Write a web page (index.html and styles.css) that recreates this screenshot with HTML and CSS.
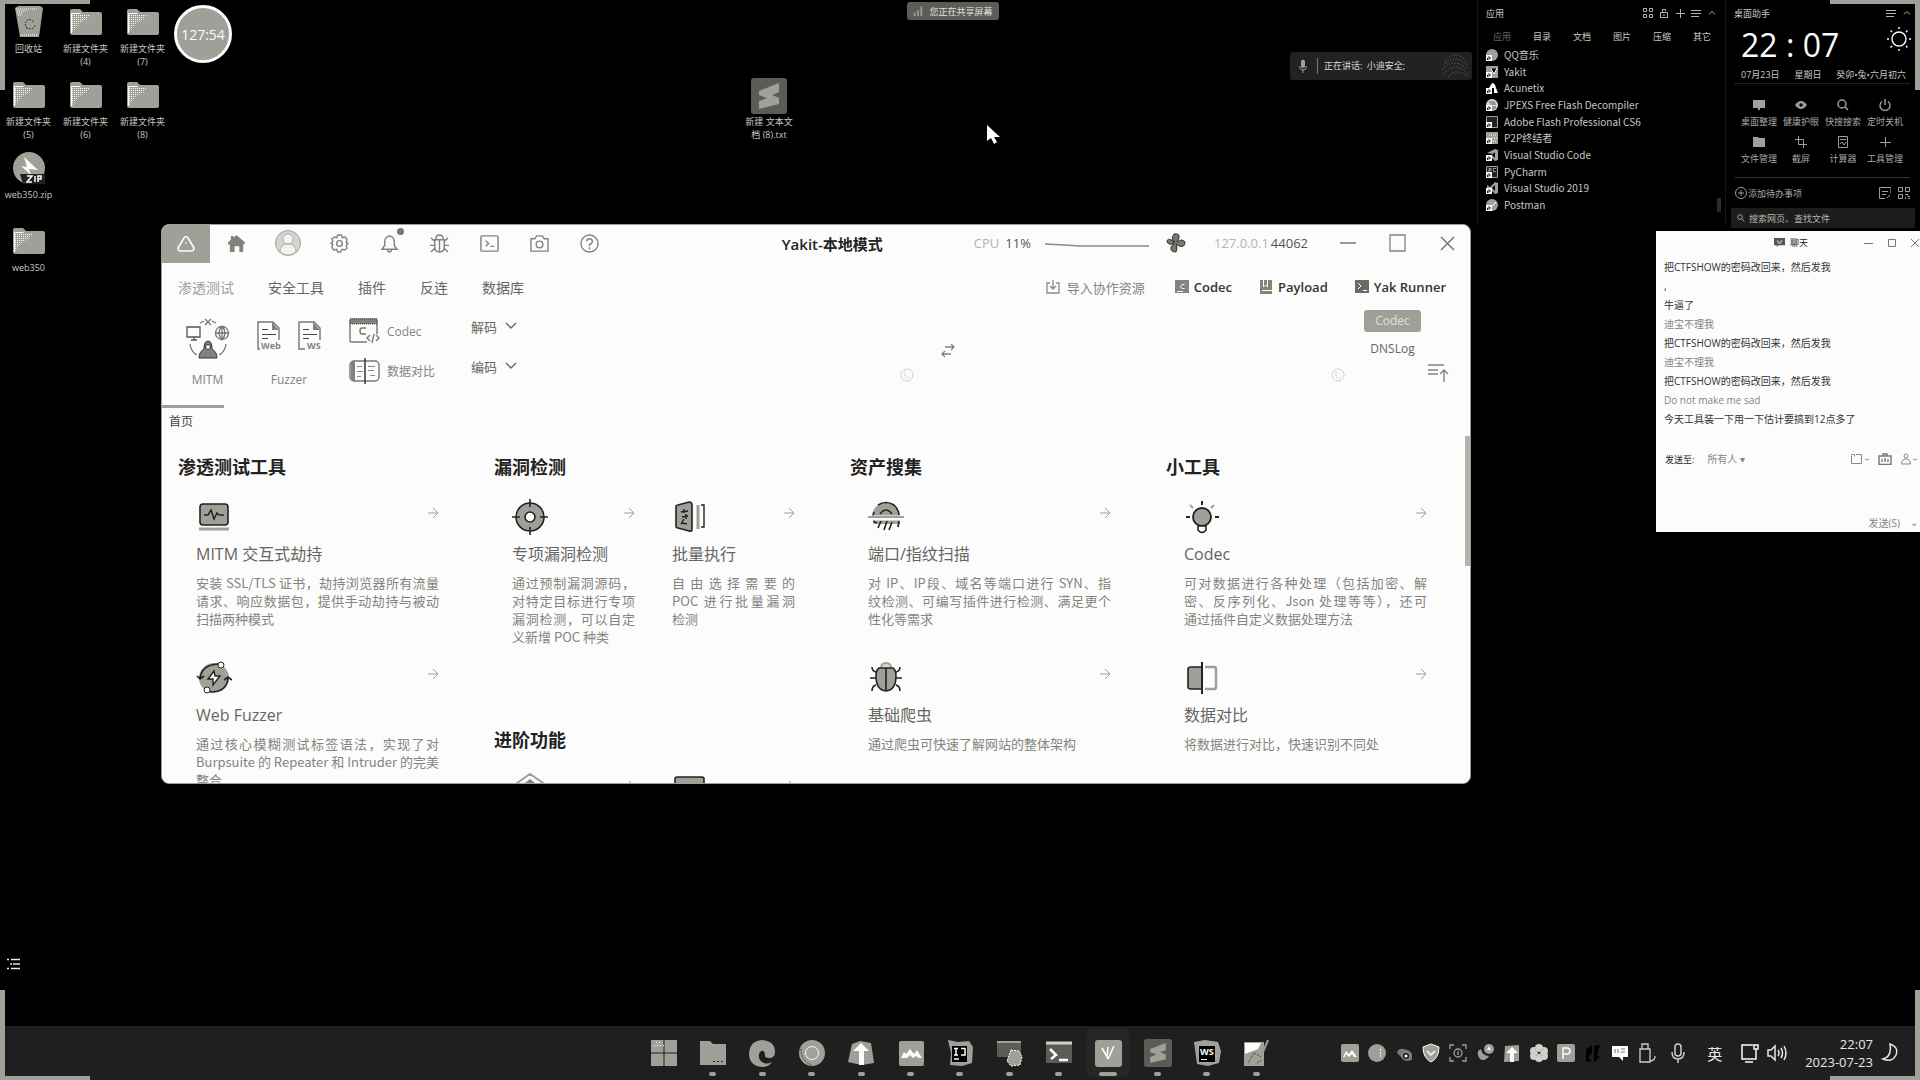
FILE: index.html
```html
<!DOCTYPE html>
<html lang="zh-CN">
<head>
<meta charset="utf-8">
<title>Yakit-本地模式</title>
<link rel="stylesheet" href="styles.css">
</head>
<body>
<svg class="sprite" aria-hidden="true">
  <defs>
    <pattern id="dots" width="2" height="2" patternUnits="userSpaceOnUse"><rect width="1" height="1" fill="#fcfcfc"/></pattern>
  </defs>
  <symbol id="folder" viewBox="0 0 32 26"><path fill="#a0a098" d="M0 2q0-2 2-2h8l3 3h17q2 0 2 2v19q0 2-2 2H2q-2 0-2-2z"/><path fill="url(#dots)" d="M2 5h19l-5 6-7 3-4 6-3 3z"/><path fill="none" stroke="#fcfcfc" d="M1.500 24V4.500h9"/></symbol>
  <symbol id="arrow" viewBox="0 0 12 12"><path fill="none" stroke="#a0a098" d="M1 6h10M6 1l5 5-5 5"/></symbol>
  <symbol id="chev" viewBox="0 0 12 12"><path fill="none" stroke="currentColor" stroke-width="1.400" d="M1 3l5 5 5-5"/></symbol>
  <symbol id="sublime" viewBox="0 0 36 36"><rect width="36" height="36" rx="3" fill="#5c5c57"/><path fill="#a0a098" d="M8 13L28 5v9l-7 3 7 3v6L8 31v-8l8-3-8-3z"/></symbol>
  <symbol id="shortcut" viewBox="0 0 12 12"><rect y="6" width="6" height="6" fill="#fcfcfc"/><path d="M1.500 11V9h2M2.500 7.500L4.500 9l-2 1.500" stroke="#222" fill="none"/></symbol>
  <symbol id="menu" viewBox="0 0 10 10"><path stroke="#b4b4ac" d="M0 2.500h10M0 5.500h10M0 8.500h8"/></symbol>
  <symbol id="up" viewBox="0 0 10 10"><path stroke="#b4b4ac" fill="none" d="M2 6.500l3-3 3 3"/></symbol>
</svg>

<main class="desktop">
  <span class="corner tl"></span><span class="corner tr"></span><span class="corner bl"></span><span class="corner br"></span>

  <section class="files" aria-label="桌面图标">
    <button class="file"><svg viewBox="0 0 32 32"><path fill="#a0a098" d="M2 2l3-2h22l3 2-4 29H7z"/><path fill="none" stroke="#fcfcfc" stroke-dasharray="1 1" d="M3 3h22M4 5h10M4 7h6M5 9h4M7 29h18"/><path fill="none" stroke="#333" stroke-dasharray="2 1" d="M12 17l4-4 5 3M13 22l6 1 4-4M12 18l2 4"/></svg><span>回收站</span></button>
    <button class="file"><svg><use href="#folder"/></svg><span>新建文件夹<br>(4)</span></button>
    <button class="file"><svg><use href="#folder"/></svg><span>新建文件夹<br>(7)</span></button>
    <button class="file"><svg><use href="#folder"/></svg><span>新建文件夹<br>(5)</span></button>
    <button class="file"><svg><use href="#folder"/></svg><span>新建文件夹<br>(6)</span></button>
    <button class="file"><svg><use href="#folder"/></svg><span>新建文件夹<br>(8)</span></button>
    <button class="file newrow"><svg viewBox="0 0 32 32"><circle cx="16" cy="16" r="16" fill="#a0a098"/><path fill="#fcfcfc" d="M11 5l14 13-9-1 2 6L8 14l6 1z"/><path d="M7 22h26v10H10z" fill="#222"/><path d="M14 24h5l-5 6h5M22 24v6M25 30v-6h3v3h-3" stroke="#fcfcfc" stroke-width="1.500" fill="none"/></svg><span>web350.zip</span></button>
    <button class="file newrow"><svg><use href="#folder"/></svg><span>web350</span></button>
  </section>

  <div class="timer">127:54</div>
  <button class="file textfile"><svg><use href="#sublime"/></svg><span>新建 文本文<br>档 (8).txt</span></button>
  <div class="sharing"><svg viewBox="0 0 12 12"><path stroke="#a0a098" stroke-width="2" d="M2 12V8M6 12V5M10 12V1"/></svg>您正在共享屏幕</div>
  <div class="speaking"><svg viewBox="0 0 10 14"><path fill="#a0a098" d="M3 2q2-3 4 0v6q-2 2-4 0z"/><path fill="none" stroke="#a0a098" d="M1.500 7q0 4 3.500 4t3.500-4M5 11v3"/></svg><span class="who">正在讲话:&ensp;小迪安全;</span><svg class="wave" viewBox="0 0 30 26"><path fill="none" stroke="#777770" stroke-dasharray="1 2" d="M5 9q10-14 22 0M3 13q12-14 25 0M2 17q12-14 26 0M4 21q10-14 24 0M8 24q8-10 20 0"/></svg></div>
  <svg class="cursor" viewBox="0 0 14 20"><path fill="#fcfcfc" d="M0 0v16l4-3 3 6 3-2-3-5h6z"/></svg>

  <section class="apps">
    <header><span>应用</span>
      <svg viewBox="0 0 10 10"><path fill="none" stroke="#b4b4ac" d="M.5.5h3v3h-3zM6.500.5h3v3h-3zM.5 6.500h3v3h-3zM6.500 6.500h3v3h-3z"/></svg>
      <svg viewBox="0 0 10 10"><path fill="none" stroke="#b4b4ac" d="M1.500 4.500h7v5h-7zM3.500 4V1.500h3V3M4 7h2"/></svg>
      <svg viewBox="0 0 10 10"><path stroke="#b4b4ac" d="M5.500 1v9M1 5.500h9"/></svg>
      <svg><use href="#menu"/></svg><svg><use href="#up"/></svg>
    </header>
    <nav><button class="dim">应用</button><button>目录</button><button>文档</button><button>图片</button><button>压缩</button><button>其它</button></nav>
    <ul>
      <li><svg viewBox="0 0 12 12"><circle cx="6" cy="6" r="6" fill="#a0a098"/><use href="#shortcut"/></svg>QQ音乐</li>
      <li><svg viewBox="0 0 12 12"><rect width="12" height="12" fill="#a0a098"/><path stroke="#fcfcfc" d="M5 3l3 5 3-6"/><use href="#shortcut"/></svg>Yakit</li>
      <li><svg viewBox="0 0 12 12"><path fill="#fcfcfc" d="M6 1q3 0 4 5l2 5H8V6H3z"/><use href="#shortcut"/></svg>Acunetix</li>
      <li><svg viewBox="0 0 12 12"><circle cx="6" cy="6" r="6" fill="#d8d8d2"/><path stroke="#555" d="M3 3h6M4 5h6M7 7v4M9 7v3"/><use href="#shortcut"/></svg>JPEXS Free Flash Decompiler</li>
      <li><svg viewBox="0 0 12 12"><path fill="#222" stroke="#a0a098" d="M.5.5h11v11H.5z"/><use href="#shortcut"/></svg>Adobe Flash Professional CS6</li>
      <li><svg viewBox="0 0 12 12"><rect width="12" height="12" fill="#a0a098"/><path stroke="#fcfcfc" stroke-dasharray="1 1" d="M3 3h7M6 6h5M7 9h4"/><use href="#shortcut"/></svg>P2P终结者</li>
      <li><svg viewBox="0 0 12 12"><path fill="#a0a098" d="M9 0l3 1v10l-3 1-5-5 3-2v0L1 4zM9 3L6 6l3 3z"/><use href="#shortcut"/></svg>Visual Studio Code</li>
      <li><svg viewBox="0 0 12 12"><path fill="#222" stroke="#a0a098" d="M.5.5h11v11H.5zM3 6V2.500h2v2H3M10 2.500H7.500v3H10"/><use href="#shortcut"/></svg>PyCharm</li>
      <li><svg viewBox="0 0 12 12"><path fill="#a0a098" d="M9 0l3 1v10l-3 1-5-5-3 2V3l3 2zM9 3L6 6l3 3z"/><use href="#shortcut"/></svg>Visual Studio 2019</li>
      <li><svg viewBox="0 0 12 12"><circle cx="6" cy="6" r="6" fill="#a0a098"/><path stroke="#fcfcfc" d="M5 8l5-5"/><use href="#shortcut"/></svg>Postman</li>
    </ul>
    <i class="thumb"></i>
  </section>

  <section class="helper">
    <header><span>桌面助手</span><svg><use href="#menu"/></svg><svg><use href="#up"/></svg></header>
    <div class="clock"><time>22 : 07</time><svg viewBox="0 0 24 24"><g fill="none" stroke="#fcfcfc" stroke-width="1.400"><circle cx="12" cy="12" r="7"/><path d="M12 0v2M12 22v2M0 12h2M22 12h2M3.500 3.500l1.500 1.500M19 19l1.500 1.500M3.500 20.500L5 19M19 5l1.500-1.500"/></g></svg></div>
    <div class="date"><span>07月23日</span><span>星期日</span><span>癸卯•兔•六月初六</span></div>
    <div class="tools">
      <button><svg viewBox="0 0 12 12"><path fill="#a0a098" d="M0 1h12v8H7v2H5V9H0z"/></svg>桌面整理</button>
      <button><svg viewBox="0 0 12 12"><path fill="#a0a098" d="M0 6q6-8 12 0-6 8-12 0z"/><circle cx="6" cy="6" r="1.800"/></svg>健康护眼</button>
      <button><svg viewBox="0 0 12 12"><path fill="none" stroke="#a0a098" stroke-width="1.500" d="M8 8l3 3M9 5a4 4 0 1 1-8 0 4 4 0 0 1 8 0z"/></svg>快搜搜索</button>
      <button><svg viewBox="0 0 12 12"><path fill="none" stroke="#a0a098" stroke-width="1.400" d="M3 2.500a5 5 0 1 0 6 0M6 0v6"/></svg>定时关机</button>
      <button><svg viewBox="0 0 12 12"><path fill="#a0a098" d="M0 1h5l1 1h6v9H0z"/></svg>文件管理</button>
      <button><svg viewBox="0 0 12 12"><path fill="none" stroke="#a0a098" d="M3.500 0v8.500H12M0 3.500h8.500V12"/></svg>截屏</button>
      <button><svg viewBox="0 0 12 12"><path fill="none" stroke="#a0a098" d="M1.500.5h9v11h-9zM3 3.500h6M3 8l2-2 2 3 2-3"/></svg>计算器</button>
      <button><svg viewBox="0 0 12 12"><path stroke="#a0a098" d="M6.500 1v10M1 6.500h11"/></svg>工具管理</button>
    </div>
    <div class="todo"><svg viewBox="0 0 12 12"><circle cx="6" cy="6" r="5.500" fill="none" stroke="#a0a098"/><path stroke="#a0a098" d="M6 3v6M3 6h6"/></svg><span>添加待办事项</span><svg viewBox="0 0 12 12"><path fill="none" stroke="#a0a098" d="M12 7V.5H.5v11H6M3 4.500h6M3 7.500h4M8 11l3-3"/></svg><svg viewBox="0 0 12 12"><path fill="none" stroke="#a0a098" d="M.5.5h4v4h-4zM7.500.5h4v4h-4zM.5 7.500h4v4h-4zM7 7.500h3v2h2M7.500 12v-2M10 11.500h2"/></svg></div>
    <label class="search"><svg viewBox="0 0 12 12"><path fill="none" stroke="#a0a098" stroke-width="1.500" d="M7 7l4 4M8 4.500a3.500 3.500 0 1 1-7 0 3.500 3.500 0 0 1 7 0z"/></svg><input aria-label="搜索" placeholder="搜索网页、查找文件"></label>
  </section>

  <section class="chat">
    <header><svg viewBox="0 0 12 12"><path fill="#555" d="M0 1h12v8H5l-2 2V9H0z"/><path stroke="#fcfcfc" d="M3 4.500h2M7 4.500h2M4 6.500h4"/></svg><span>聊天</span>
      <div class="ctl"><svg viewBox="0 0 10 10"><path stroke="#777" d="M0 5.500h9"/></svg><svg viewBox="0 0 10 10"><path fill="none" stroke="#777" d="M1.500 1.500h7v7h-7z"/></svg><svg viewBox="0 0 10 10"><path stroke="#777" d="M1 1l8 8M9 1L1 9"/></svg></div></header>
    <div class="log">
      <p>把CTFSHOW的密码改回来，然后发我</p><p>,</p><p>牛逼了</p><p class="dim">迪宝不理我</p><p>把CTFSHOW的密码改回来，然后发我</p><p class="dim">迪宝不理我</p><p>把CTFSHOW的密码改回来，然后发我</p><p class="dim">Do not make me sad</p><p>今天工具装一下用一下估计要搞到12点多了</p>
    </div>
    <div class="to"><label for="to">发送至:</label><select id="to"><option>所有人 ▾</option></select>
      <svg viewBox="0 0 20 12"><path fill="none" stroke="#888" d="M1.500 1.500h3v2M6 1.500h5.500v9h-10v-8M15 6l2 1 2-1"/></svg>
      <svg viewBox="0 0 14 12"><path fill="none" stroke="#777" stroke-width="1.400" d="M1 3h12v8.500H1zM5 3V1h4v2M4 9V6M7 9V5M10 9V6"/></svg>
      <svg viewBox="0 0 20 12"><path fill="none" stroke="#888" d="M4 3a2 2 0 1 1 4 0 2 2 0 0 1-4 0zM1.500 11q0-5 4.500-5t4.500 5zM13 6l2 1 2-1"/></svg>
    </div>
    <textarea aria-label="消息"></textarea>
    <footer><button>发送(S)</button><button aria-label="更多">⌄</button></footer>
  </section>

  <section class="yakit">
    <header class="titlebar">
      <button class="logo" aria-label="Yakit"><svg viewBox="0 0 20 20"><path fill="none" stroke="#fcfcfc" stroke-width="1.600" stroke-linejoin="round" d="M8 4q2-3 4 0l6 10q0 3-3 3H5q-3 0-3-3z"/><path stroke="#fcfcfc" d="M10 8v2"/></svg></button>
      <div class="tbicons">
        <button aria-label="首页"><svg viewBox="0 0 20 20"><path fill="#83837c" d="M10 1l9 8-1 2h-1v8h-4v-6H8v6H3v-8H1V9l3-3V2h3v2z"/></svg></button>
        <button aria-label="用户"><svg class="ava" viewBox="0 0 26 26"><circle cx="13" cy="13" r="12.500" fill="#d5d5d0" stroke="#a0a098"/><path fill="#f4f4f2" stroke="#b0b0a8" d="M8 9a5 5 0 1 1 10 0 5 5 0 0 1-10 0zM5 22q0-8 8-8t8 8q-8 6-16 0z"/></svg></button>
        <button aria-label="设置"><svg viewBox="0 0 20 20"><path fill="none" stroke="#83837c" stroke-width="1.500" stroke-linejoin="round" d="M8 1h4l1 3 3-1 2 3-1 3 2 1-2 2 1 3-3 2-2-1-2 3H8l-1-3-3 1-2-3 1-3-2-1 2-2-1-3 3-2 2 1z"/><circle cx="10" cy="10" r="3" fill="none" stroke="#83837c" stroke-width="1.500"/></svg></button>
        <button aria-label="通知" class="bell"><svg viewBox="0 0 20 20"><path fill="none" stroke="#83837c" stroke-width="1.500" d="M2 16h16l-3-4V8q0-5-5-6-5 1-5 6v4zM8 16q0 3 2 3t2-3"/></svg><i></i></button>
        <button aria-label="调试"><svg viewBox="0 0 20 20"><path fill="none" stroke="#83837c" stroke-width="1.500" d="M6 6q0-5 4-5t4 5zM5 6h10v8q0 5-5 5t-5-5zM10 6v13M0 12h5M15 12h5M1 4l4 4M19 4l-4 4M1 19l4-4M19 19l-4-4"/></svg></button>
        <button aria-label="终端"><svg viewBox="0 0 20 20"><path fill="none" stroke="#83837c" stroke-width="1.500" d="M2 2h16q1 0 1 1v14q0 1-1 1H2q-1 0-1-1V3q0-1 1-1zM6 7l3 3-3 3M11 13h4"/></svg></button>
        <button aria-label="截图"><svg viewBox="0 0 20 20"><path fill="none" stroke="#83837c" stroke-width="1.500" d="M1 5h4l2-3h6l2 3h4v13H1z"/><circle cx="10" cy="11" r="3.500" fill="none" stroke="#83837c" stroke-width="1.500"/></svg></button>
        <button aria-label="帮助"><svg viewBox="0 0 20 20"><circle cx="10" cy="10" r="9" fill="none" stroke="#83837c" stroke-width="1.500"/><path fill="none" stroke="#83837c" stroke-width="1.500" d="M7 8q0-3 3-3t3 3q0 2-3 3v2M10 14v2"/></svg></button>
      </div>
      <h1>Yakit-本地模式</h1>
      <div class="cpu"><span class="faint">CPU</span><span>11%</span><svg viewBox="0 0 104 12"><path fill="none" stroke="#8c8c84" stroke-width="1.500" d="M0 7l20 1 14 1h70"/></svg></div>
      <svg class="fan" viewBox="0 0 20 20"><path fill="#777770" stroke="#333" d="M9 9Q4 7 8 1q6-1 5 4l-2 4q5-4 8 0 0 6-6 4l-3-2q2 4 0 8-6 0-5-5l3-4q-5 3-7-1 0-5 6-1z"/></svg>
      <div class="addr"><span class="faint">127.0.0.1</span><span>44062</span></div>
      <div class="winctl">
        <button aria-label="最小化"><svg viewBox="0 0 18 18"><path stroke="#777770" stroke-width="1.500" d="M1 9h16"/></svg></button>
        <button aria-label="最大化"><svg viewBox="0 0 18 18"><path fill="none" stroke="#83837c" stroke-width="1.300" d="M1 1h15v16H1z"/></svg></button>
        <button aria-label="关闭"><svg viewBox="0 0 18 18"><path stroke="#777770" stroke-width="1.500" d="M2 3l13 13M15 3L2 16"/></svg></button>
      </div>
    </header>

    <nav class="menubar">
      <button class="sel">渗透测试</button><button>安全工具</button><button>插件</button><button>反连</button><button>数据库</button>
      <div class="quick">
        <button class="import"><svg viewBox="0 0 14 14"><path fill="none" stroke="#8c8c84" stroke-width="1.300" d="M4 3H1v10h12V3h-3M7 0v8M4 6l3 3 3-3"/></svg>导入协作资源</button>
        <button><svg viewBox="0 0 14 14"><path fill="#83837c" d="M0 0h14v13H0z"/><path fill="none" stroke="#fcfcfc" d="M9.500 4.500H7L5.500 6.500 7 8.500h2.500M2 11.500h6"/></svg>Codec</button>
        <button><svg viewBox="0 0 14 14"><path fill="#83837c" d="M1 0h12v14H1z"/><path fill="none" stroke="#fcfcfc" d="M4.500 0v7l2-2 2 2V0M3 10.500h10"/></svg>Payload</button>
        <button><svg viewBox="0 0 14 14"><path fill="#6b6b65" d="M0 0h14v13H0z"/><path fill="none" stroke="#fcfcfc" d="M3 3l3 3-3 3M8 10.500h4"/></svg>Yak Runner</button>
      </div>
    </nav>

    <div class="ribbon">
      <button class="big"><svg class="mitm" viewBox="0 0 44 42"><g fill="none" stroke="#77776f" stroke-width="1.300"><path stroke="#555" d="M1 9h13v10H1zM5 22h6M8 19v3"/><circle cx="36" cy="15" r="6.500"/><path d="M36 8v14M29 15h14M36 8q-6 7 0 14M36 8q6 7 0 14M4 26q1 8 7 11M40 26q-1 8-7 11M14 5l4-2M30 5l-4-2M19 1l6 6M25 1l-6 6"/></g><path fill="#83837c" stroke="#333" d="M18 31q0-8 4-8t4 8q5 3 5 9H13q0-6 5-9z"/><circle cx="22" cy="29" r="2.500" fill="#eee" stroke="#333"/></svg>MITM</button>
      <button class="big"><span class="pair">
        <svg viewBox="0 0 26 30"><path fill="none" stroke="#77776f" stroke-width="1.400" d="M3 28H1V1h15l6 6v12"/><path fill="#83837c" d="M15 1l7 8h-7z"/><path stroke="#444" d="M5 8.500h6M5 13.500h14M5 17.500h6"/><text x="4" y="28">Web</text></svg>
        <svg viewBox="0 0 26 30"><path fill="none" stroke="#77776f" stroke-width="1.400" d="M7 28H1V1h15l6 6v12"/><path fill="#83837c" d="M15 1l7 8h-7z"/><path stroke="#444" d="M5 8.500h6M5 13.500h14M5 17.500h6"/><text x="9" y="28">WS</text></svg></span>Fuzzer</button>
      <div class="stack">
        <button><svg viewBox="0 0 32 26"><path fill="none" stroke="#77776f" stroke-width="1.400" d="M18 24H2q-1 0-1-2V3q0-2 1-2h25q1 0 1 2v13M17 10h-4q-2 0-2 3t2 3h4M21 17l-3 3 3 3M27 17l3 3-3 3M25 16l-2 9"/><path fill="#83837c" stroke="#444" stroke-dasharray="1 1" d="M1 1h27v5H1z"/></svg>Codec</button>
        <button><svg viewBox="0 0 32 26"><rect x="1" y="3" width="29" height="20" rx="4" fill="none" stroke="#77776f" stroke-width="1.400"/><path fill="#83837c" d="M2 5q0-2 4-2v20q-4 0-4-3z"/><path stroke="#333" stroke-width="1.500" d="M16 0v26"/><path stroke="#888" d="M8 8.500h5M8 13.500h6M8 18.500h4M19 8.500h7M19 12.500h6M21 17.500h5"/></svg>数据对比</button>
      </div>
      <div class="drops"><button>解码 <svg><use href="#chev"/></svg></button><button>编码 <svg><use href="#chev"/></svg></button></div>
      <svg class="spin one" viewBox="0 0 14 14"><circle cx="7" cy="7" r="6" fill="none" stroke="#b8b8b0" stroke-dasharray="2 1"/><path d="M5 3v6q3 2 5 0" fill="none" stroke="#b8b8b0" stroke-dasharray="1 1"/></svg>
      <svg class="swap" viewBox="0 0 14 14"><path fill="none" stroke="#83837c" stroke-width="1.300" d="M4 3h9M10 0l3 3-3 3M10 10H1M4 7l-3 3 3 3"/></svg>
      <svg class="spin two" viewBox="0 0 14 14"><circle cx="7" cy="7" r="6" fill="none" stroke="#b8b8b0" stroke-dasharray="2 1"/><path d="M5 3v6q3 2 5 0" fill="none" stroke="#b8b8b0" stroke-dasharray="1 1"/></svg>
      <div class="modes"><button class="on">Codec</button><button>DNSLog</button></div>
      <button class="fold" aria-label="收起"><svg viewBox="0 0 22 20"><path fill="none" stroke="#83837c" stroke-width="1.400" d="M0 2h16M0 7h10M0 11h10M16 19V7M12 11l4-4 4 4"/></svg></button>
    </div>

    <div class="tabs"><button>首页</button></div>

    <div class="home">
      <div class="col">
        <section><h2>渗透测试工具</h2>
          <article><svg class="ic" viewBox="0 0 36 36"><rect x="4" y="5" width="28" height="21" rx="3" fill="#a0a098" stroke="#222" stroke-width="1.600"/><path fill="none" stroke="#222" stroke-width="1.500" d="M8 16h4l3-5 3 9 3-6 2 2h5"/><path stroke="#a0a098" stroke-width="3" d="M3 30h30"/></svg><svg class="go"><use href="#arrow"/></svg><h3>MITM 交互式劫持</h3><p>安装 SSL/TLS 证书，劫持浏览器所有流量请求、响应数据包，提供手动劫持与被动扫描两种模式</p></article>
          <article><svg class="ic" viewBox="0 0 36 36"><circle cx="18" cy="18" r="15" fill="#a0a098"/><path fill="none" stroke="#222" stroke-width="1.600" d="M4 19Q5 5 22 4M32 18q-1 14-18 14M1 16l3 3 4-3M28 20l4-3 4 3"/><circle cx="25" cy="5" r="3" fill="#fcfcfc" stroke="#222"/><circle cx="11" cy="30" r="3" fill="#fcfcfc" stroke="#222"/><path fill="#fcfcfc" stroke="#222" stroke-width="1.400" d="M18 11l-6 8h5v6l7-9h-5z"/></svg><svg class="go"><use href="#arrow"/></svg><h3>Web Fuzzer</h3><p><span class="line">通过核心模糊测试标签语法，实现了对</span><span class="line">Burpsuite 的 Repeater 和 Intruder 的完美</span>整合</p></article>
        </section>
      </div>
      <div class="col">
        <section><h2>漏洞检测</h2><div class="two">
          <article><svg class="ic" viewBox="0 0 36 36"><circle cx="18" cy="18" r="14" fill="#a0a098" stroke="#222" stroke-width="1.600"/><circle cx="18" cy="18" r="5" fill="#fcfcfc" stroke="#222" stroke-width="1.600"/><path stroke="#222" stroke-width="1.600" d="M18 0v8M18 28v8M0 18h8M28 18h8"/></svg><svg class="go"><use href="#arrow"/></svg><h3>专项漏洞检测</h3><p>通过预制漏洞源码，对特定目标进行专项漏洞检测，可以自定义新增 POC 种类</p></article>
          <article><svg class="ic" viewBox="0 0 36 36"><path fill="#a0a098" stroke="#222" stroke-width="1.600" d="M4 8q0-2 2-2l11-3q3 0 3 3v24q0 3-3 2L6 29q-2 0-2-2z"/><path fill="none" stroke="#222" stroke-width="1.400" d="M9 13l7-1M10 18l6-1M12 10v4M14 15v5M9 25l3-5M15 25l-5-1"/><path stroke="#a0a098" stroke-width="3" d="M26 6v24"/><path fill="none" stroke="#222" stroke-width="1.400" d="M29 6h3v22h-3"/></svg><svg class="go"><use href="#arrow"/></svg><h3>批量执行</h3><p><span class="line">自由选择需要的</span><span class="line">POC 进行批量漏洞</span>检测</p></article>
        </div></section>
        <section><h2>进阶功能</h2><div class="two">
          <article><svg class="ic" viewBox="0 0 36 36"><path fill="none" stroke="#a0a098" stroke-width="2" d="M5 11L18 2l13 9v14l-13 9-13-9z"/><path fill="#83837c" d="M13 11l5-4 5 4v12H13z"/></svg><svg class="go"><use href="#arrow"/></svg></article>
          <article><svg class="ic" viewBox="0 0 36 36"><rect x="3" y="5" width="29" height="26" rx="2" fill="#a0a098" stroke="#222" stroke-width="1.600"/></svg><svg class="go"><use href="#arrow"/></svg></article>
        </div></section>
      </div>
      <div class="col">
        <section><h2>资产搜集</h2>
          <article><svg class="ic" viewBox="0 0 36 36"><path fill="#a0a098" d="M4 17Q5 5 18 4q13 1 14 13v8H6z"/><path fill="none" stroke="#222" stroke-width="1.600" d="M10 6q8-5 16 0 5 5 5 10M6 13l-1 4M12 15q6-8 12 0M6 21v2l3 1M13 22l-3 7M19 22l-3 9M24 23l-3 8M31 22l-1 6"/><path stroke="#fcfcfc" stroke-width="5" d="M0 19h36"/><path stroke="#a0a098" stroke-width="2" d="M0 18h36"/></svg><svg class="go"><use href="#arrow"/></svg><h3>端口/指纹扫描</h3><p><span class="line">对 IP、IP段、域名等端口进行 SYN、指</span><span class="line">纹检测、可编写插件进行检测、满足更个</span>性化等需求</p></article>
          <article><svg class="ic" viewBox="0 0 36 36"><path fill="#d8d8d2" stroke="#a0a098" stroke-width="2" d="M13 8q0-5 5-5t5 5"/><path fill="#a0a098" stroke="#222" stroke-width="1.600" d="M11 8h14q3 2 3 8 0 14-10 15Q8 30 8 16q0-6 3-8zM18 8v23"/><path fill="none" stroke="#222" stroke-width="1.600" d="M8 12q-4-1-4-5M28 12q4-1 4-5M8 18H2M28 18h6M8 25q-4 1-4 6M28 25q4 1 4 6"/></svg><svg class="go"><use href="#arrow"/></svg><h3>基础爬虫</h3><p>通过爬虫可快速了解网站的整体架构</p></article>
        </section>
      </div>
      <div class="col">
        <section><h2>小工具</h2>
          <article><svg class="ic" viewBox="0 0 36 36"><circle cx="18" cy="18" r="9" fill="#a0a098" stroke="#222" stroke-width="1.800"/><path fill="#fcfcfc" stroke="#222" stroke-width="1.600" d="M14 27h8v4q-4 5-8 0z"/><path stroke="#222" stroke-width="2" d="M18 2v4M2 18h4M31 18h4"/><path stroke="#a0a098" stroke-width="2" d="M6 6l3 3M30 6l-3 3"/></svg><svg class="go"><use href="#arrow"/></svg><h3>Codec</h3><p><span class="line">可对数据进行各种处理（包括加密、解</span><span class="line">密、反序列化、Json 处理等等），还可</span>通过插件自定义数据处理方法</p></article>
          <article><svg class="ic" viewBox="0 0 36 36"><path fill="#a0a098" stroke="#222" stroke-width="1.600" d="M18 7H7Q4 7 4 9v18q0 2 3 2h11z"/><path fill="none" stroke="#a0a098" stroke-width="2.500" d="M21 7h9q2 0 2 2v18q0 2-2 2h-9"/><path stroke="#222" stroke-width="2" d="M18 2v32"/></svg><svg class="go"><use href="#arrow"/></svg><h3>数据对比</h3><p>将数据进行对比，快速识别不同处</p></article>
        </section>
      </div>
      <i class="scroll"></i>
    </div>
  </section>

  <svg class="listicon" viewBox="0 0 13 12"><path stroke="#e8e8e4" stroke-width="1.600" d="M0 1.500h2M4 1.500h9M3 6h2M6 6h7M0 10.500h2M4 10.500h9"/></svg>
</main>

<footer class="taskbar">
  <div class="pinned">
    <button aria-label="开始" class="idle"><svg viewBox="0 0 28 28"><path fill="#a0a098" d="M1 1h12.500v12.500H1zM14.500 1H27v12.500H14.500zM1 14.500h12.500V27H1zM14.500 14.500H27V27H14.500z"/><path stroke="#fcfcfc" stroke-dasharray="1 2" d="M4 6.500h10M6 3.500h6"/></svg></button>
    <button aria-label="文件夹"><svg viewBox="0 0 28 28"><path fill="#a0a098" d="M1 2h10l3 3h13v21H1z"/><path stroke="#222" stroke-dasharray="2 2" d="M14 22.500h10"/></svg></button>
    <button aria-label="Edge"><svg viewBox="0 0 28 28"><path fill="#a0a098" d="M14 1q13 1 13 12 0 6-6 6-5 0-4-4-1-4-4-3-4 3-1 9 5 6 12 2-3 5-10 5Q1 27 1 14 2 2 14 1z"/></svg></button>
    <button aria-label="Chrome"><svg viewBox="0 0 28 28"><circle cx="14" cy="14" r="13" fill="#a0a098"/><path fill="none" stroke="#444" stroke-dasharray="2 1" d="M3 10q0 12 11 16"/><circle cx="14" cy="14" r="6.500" fill="#a0a098" stroke="#fcfcfc"/></svg></button>
    <button aria-label="传输"><svg viewBox="0 0 28 28"><path fill="#a0a098" d="M5 5l8-3 11 2 3 20-12 2-14-3z"/><path fill="#fcfcfc" d="M14 4l8 8h-5v14h-5V12H6z"/></svg></button>
    <button aria-label="会议"><svg viewBox="0 0 28 28"><rect x="2" y="2" width="25" height="25" rx="2" fill="#a0a098"/><path fill="#fcfcfc" d="M4 19l3-6 2 2 4-5 4 5 3-4 5 8h-3l-3-2-3 2-3-3-3 3z"/></svg></button>
    <button aria-label="IDEA"><svg viewBox="0 0 28 28"><path fill="#a0a098" d="M2 1l10 2 11-1 4 6-1 16-10 3-12-1 1-12z"/><path fill="#000" d="M6 7h15v16H6z"/><path fill="none" stroke="#fcfcfc" stroke-width="1.500" d="M8 9.500h4M10 10v6M8 16h4M15 9.500h4v6.500h-4M8 20h5"/></svg></button>
    <button aria-label="工具"><svg viewBox="0 0 28 28"><path fill="#5c5c57" d="M2 2h24v16H2z"/><path stroke="#a0a098" stroke-width="2" d="M2 3h24"/><path fill="#a0a098" stroke="#fcfcfc" stroke-dasharray="2 1" d="M16 11l8 1 3 6-2 8-9 1-4-5z"/></svg></button>
    <button aria-label="终端"><svg viewBox="0 0 28 28"><path fill="#5c5c57" d="M1 5h26v19H1z"/><path stroke="#d0d0ca" stroke-width="3" d="M1 4h26"/><path fill="none" stroke="#fcfcfc" stroke-width="2.500" d="M5 10l6 6-5 4M14 21h9"/></svg></button>
    <button aria-label="Yakit" class="on"><svg viewBox="0 0 28 28"><rect x="1" y="1" width="27" height="27" rx="3" fill="#a0a098"/><path fill="none" stroke="#fcfcfc" stroke-width="1.600" d="M8 9l5 9 1-10M20 7l-6 13"/></svg></button>
    <button aria-label="Sublime Text"><svg viewBox="0 0 36 36"><use href="#sublime"/></svg></button>
    <button aria-label="WebStorm"><svg viewBox="0 0 28 28"><path fill="#a0a098" d="M1 3l11-2 13 2 3 9-2 12-11 3-11-2z"/><path fill="#000" d="M6 7h16v16H6z"/><text x="7" y="16" class="ws">WS</text><path stroke="#fcfcfc" d="M8 20.500h6"/></svg></button>
    <button aria-label="记事本"><svg viewBox="0 0 28 28"><path fill="#a0a098" d="M2 3h20v24H2z"/><path fill="#fcfcfc" d="M3 4h16l-3 6-13 5z"/><path stroke="#a0a098" stroke-width="2" d="M26 1l-5 12"/><path fill="none" stroke="#444" stroke-dasharray="2 1" d="M6 24l6-10 7 4M15 24l5-3"/></svg></button>
  </div>
  <div class="tray">
    <svg viewBox="0 0 20 20"><rect x="1" y="1" width="18" height="18" rx="2" fill="#a0a098"/><path fill="#fcfcfc" d="M3 14l3-6 3 3 3-4 5 7h-3l-2-3-3 3-3-3-1 3z"/></svg>
    <svg viewBox="0 0 20 20"><circle cx="10" cy="10" r="9" fill="#a0a098"/><path stroke="#fcfcfc" stroke-dasharray="2 1" d="M13.500 6v8"/></svg>
    <svg viewBox="0 0 20 20"><path fill="#777770" d="M3 10q1-5 7-4 6 1 8 5v6q-6 2-9-1z"/><circle cx="12" cy="13" r="4" fill="#222" stroke="#a0a098"/><circle cx="12" cy="13" r="1.500" fill="#fcfcfc"/></svg>
    <svg viewBox="0 0 20 20"><path fill="#a0a098" stroke="#fcfcfc" d="M10 1l8 3q0 11-8 15Q2 15 2 4z"/><path fill="none" stroke="#fcfcfc" stroke-width="1.500" d="M6 8l4 4 4-4"/></svg>
    <svg viewBox="0 0 20 20"><path fill="none" stroke="#a0a098" stroke-width="1.300" d="M2 6V2h4M14 2h4v4M18 14v4h-4M6 18H2v-4M6 10a4 4 0 1 1 8 0 4 4 0 0 1-8 0zM10 8v4"/></svg>
    <svg viewBox="0 0 20 20"><circle cx="14" cy="6" r="5" fill="#a0a098"/><path fill="#fcfcfc" d="M14 3l2 4h-4z"/><path fill="#a0a098" d="M3 8l3-2q1 7 8 7-4 6-9 3-3-4-2-8z"/></svg>
    <svg viewBox="0 0 20 20"><path fill="#a0a098" d="M3 3l14-1v16l-15 1z"/><path fill="#fcfcfc" d="M10 4l6 6h-4v9H8v-9H4z"/></svg>
    <svg viewBox="0 0 20 20"><g fill="#d0d0ca"><circle cx="10" cy="5" r="4"/><circle cx="10" cy="15" r="4"/><circle cx="5" cy="8" r="4"/><circle cx="15" cy="8" r="4"/><circle cx="5" cy="13" r="4"/><circle cx="15" cy="13" r="4"/></g><path stroke="#777" stroke-dasharray="1 2" d="M6 6l8 8M14 6l-8 8"/></svg>
    <svg viewBox="0 0 20 20"><rect x="1" y="1" width="18" height="18" rx="2" fill="#a0a098"/><path fill="none" stroke="#fcfcfc" stroke-width="1.500" d="M7 16V5h4q3 0 3 3t-3 3H7"/></svg>
    <svg viewBox="0 0 20 20"><path fill="#000" d="M3 6l6-4v8L5 15l4 3-6 1zM11 3l6-1-3 10 3 2-6 5z"/></svg>
    <svg viewBox="0 0 20 20"><path fill="#fcfcfc" d="M2 3h16v11h-5v4l-4-4H2z"/><path stroke="#777" d="M5 6v4M8 6v4M11 6h4M11 9h4"/></svg>
    <svg viewBox="0 0 20 20"><path fill="none" stroke="#d0d0ca" stroke-width="1.300" d="M5 6V1h6v5M3 6h10v13H3zM13 18q5 0 5-5"/></svg>
    <svg class="mic" viewBox="0 0 20 20"><path fill="none" stroke="#d0d0ca" stroke-width="1.500" d="M7 4q0-3 3-3t3 3v6q0 3-3 3t-3-3zM4 9q0 7 6 7t6-7M10 16v4"/></svg>
    <button class="ime">英</button>
    <svg viewBox="0 0 20 20"><path fill="none" stroke="#fcfcfc" stroke-width="1.500" d="M13 2H2v14h14V9M5 19h8M14 2h4v4h-4zM16 6v3"/></svg>
    <svg viewBox="0 0 20 20"><path fill="none" stroke="#e8e8e4" stroke-width="1.500" d="M1 7h3l4-4v14l-4-4H1zM11 7q2 3 0 6M14 5q3 5 0 10M17 3q4 7 0 14"/></svg>
    <div class="now"><span>22:07</span><span>2023-07-23</span></div>
    <svg viewBox="0 0 20 20"><path fill="none" stroke="#e8e8e4" stroke-width="1.500" d="M10 1q9 3 6 11-4 8-13 4 9-2 7-15z"/></svg>
  </div>
</footer>
</body>
</html>
```
FILE: styles.css
```css
:root {
  --paper: #fcfcfc;
  --grey: #a0a098;
  --ink: #222;
  --mid: #66665f;
  --soft: #84847c;
  --bar: #1f1f1f;
}
* { box-sizing: border-box; }
body {
  margin: 0;
  min-height: 100vh;
  display: flex;
  flex-direction: column;
  background: #000;
  color: var(--ink);
  font-family: "Open Sans", "Noto Sans CJK SC", sans-serif;
  font-size: 13px;
  overflow: hidden;
}
button, select, input, textarea {
  font: inherit;
  color: inherit;
  background: none;
  border: 0;
  padding: 0;
  margin: 0;
  outline: 0;
}
h1, h2, h3, p, ul { margin: 0; padding: 0; }
svg { display: block; flex: none; }
.sprite { position: absolute; width: 0; height: 0; }
.desktop { position: relative; flex: 1; }

/* screen-share frame corners */
.corner { position: fixed; width: 90px; height: 90px; border: 0 solid var(--grey); z-index: 5; pointer-events: none; }
.tl { top: 0; left: 0; border-top-width: 4px; border-left-width: 5px; }
.tr { top: 0; right: 0; border-top-width: 4px; border-right-width: 5px; }
.bl { bottom: 0; left: 0; border-bottom-width: 4px; border-left-width: 5px; }
.br { bottom: 0; right: 0; border-bottom-width: 4px; border-right-width: 5px; }

/* desktop files */
.files { display: grid; grid-template-columns: repeat(3, 57px); grid-auto-rows: 73px; width: 171px; }
.newrow { grid-column: 1; }
.file {
  display: flex;
  flex-direction: column;
  align-items: center;
  padding-top: 6px;
  gap: 4px;
  color: #c8c8c2;
  font-size: 9px;
  line-height: 13px;
  white-space: nowrap;
}
.file svg { width: 32px; height: 32px; }
.textfile { position: absolute; top: 72px; left: 739px; width: 60px; gap: 1px; }
.textfile svg { width: 36px; height: 36px; }
.timer {
  position: absolute; top: 5px; left: 174px; width: 58px; height: 58px;
  border: 3px solid var(--paper); border-radius: 50%;
  background: var(--grey); color: var(--paper);
  display: flex; align-items: center; justify-content: center; font-size: 14px;
}
.sharing {
  position: absolute; top: 2px; left: 907px; width: 92px; height: 18px;
  display: flex; align-items: center; justify-content: center; gap: 6px;
  border-radius: 3px; background: #5c5c57; color: #e0e0da; font-size: 9px; white-space: nowrap;
}
.sharing svg { width: 10px; height: 10px; }
.speaking {
  position: absolute; top: 52px; left: 1290px; width: 182px; height: 28px;
  display: flex; align-items: center; padding: 0 2px 0 8px; gap: 9px;
  border-radius: 3px; background: var(--ink); color: #d8d8d2; font-size: 9px;
}
.speaking > svg:first-child { width: 10px; height: 14px; }
.who { border-left: 1px solid #777770; padding-left: 6px; flex: 1; line-height: 16px; }
.speaking .wave { width: 30px; height: 26px; }
.cursor { position: absolute; left: 987px; top: 125px; width: 14px; height: 20px; z-index: 4; }
.listicon { position: absolute; left: 7px; bottom: 56px; width: 13px; height: 12px; }

/* app launcher */
.apps, .helper { position: absolute; top: 0; color: #c8c8c2; font-size: 9px; }
.apps { right: 194px; width: 249px; height: 224px; border: solid #161616; border-width: 0 1px; }
.apps header, .helper header { display: flex; align-items: center; height: 26px; padding: 0 8px; gap: 6px; }
.apps header span, .helper header span { margin-right: auto; }
.apps header svg, .helper header svg { width: 10px; height: 10px; }
.apps nav { display: grid; grid-template-columns: repeat(6, 40px); height: 21px; padding-left: 4px; }
.apps .dim { color: var(--mid); }
.apps ul {
  list-style: none; height: 166px; padding: 0 8px; line-height: 16px;
  font-family: "Noto Sans CJK SC", sans-serif; font-size: 10px;
  display: flex; flex-direction: column; justify-content: space-between;
}
.apps li { display: flex; align-items: center; gap: 6px; }
.apps li svg { width: 12px; height: 12px; }
.thumb { position: absolute; right: 4px; top: 198px; width: 4px; height: 14px; background: #2c2c2c; }

/* desktop helper */
.helper { right: 0; width: 194px; height: 229px; }
.clock { display: flex; justify-content: space-between; padding: 0 9px 0 15px; height: 40px; color: var(--paper); }
.clock time { font: 32px/38px "Open Sans", sans-serif; }
.clock svg { width: 24px; height: 24px; margin-top: 1px; }
.date { display: flex; justify-content: space-between; margin: 0 10px 0 8px; padding: 0 4px 0 7px; height: 18px; line-height: 17px; border-bottom: 1px solid var(--ink); }
.tools { display: grid; grid-template-columns: repeat(4, 42px); grid-auto-rows: 37px; padding: 15px 0 4px 12px; }
.tools button { display: flex; flex-direction: column; align-items: center; gap: 4px; line-height: 13px; white-space: nowrap; color: #a8a8a0; }
.tools svg { width: 12px; height: 12px; }
.todo { display: flex; align-items: center; margin: 0 10px 0 9px; height: 31px; border-top: 1px solid #333; gap: 7px; color: #a8a8a0; }
.todo span { margin: 0 auto 0 -6px; }
.todo svg { width: 12px; height: 12px; }
.search { display: flex; align-items: center; gap: 4px; height: 20px; margin: 0 5px; padding-left: 6px; background: #1c1c1c; }
.search svg { width: 8px; height: 8px; }
.search input { flex: 1; min-width: 0; }
.search input::placeholder { color: #b4b4ac; opacity: 1; }

/* chat window */
.chat {
  position: absolute; right: 0; top: 231px; width: 264px; height: 301px;
  background: var(--paper); font-size: 10px; display: flex; flex-direction: column; overflow: hidden;
}
.chat header { position: relative; display: flex; align-items: center; height: 23px; padding-left: 118px; gap: 5px; font-size: 9px; }
.chat header svg { width: 11px; height: 11px; }
.chat .ctl { display: flex; gap: 13px; margin-left: auto; }
.chat .ctl svg { width: 10px; height: 10px; }
.log { padding: 4px 8px 0; line-height: 19px; height: 195px; color: #333; }
.log .dim { color: var(--soft); }
.to { display: flex; align-items: center; padding-left: 9px; gap: 5px; height: 20px; font-size: 9px; }
.to select { appearance: none; color: var(--soft); margin: 0 auto 0 8px; font-size: 10px; }
.to svg { height: 12px; width: 20px; }
.chat textarea { flex: 1; min-height: 0; resize: none; }
.chat footer { display: flex; justify-content: flex-end; gap: 10px; height: 20px; padding-right: 2px; color: var(--soft); }

/* Yakit window */
.yakit {
  position: absolute; top: 224px; left: 161px; right: 449px; height: 560px;
  display: flex; flex-direction: column; overflow: hidden;
  background: var(--paper); border: 1px solid var(--grey); border-radius: 8px;
}
.titlebar { display: flex; align-items: center; height: 38px; flex: none; padding: 0 13px 2px 0; }
.logo { align-self: flex-start; width: 48px; height: 38px; background: var(--grey); display: grid; place-items: center; }
.logo svg { width: 20px; height: 20px; }
.tbicons { display: flex; }
.tbicons button { width: 50px; height: 26px; display: grid; place-items: center; position: relative; }
.tbicons svg { width: 19px; height: 19px; }
.tbicons .ava { width: 26px; height: 26px; }
.tbicons button:nth-child(-n+2) { width: 52px; }
.bell i { position: absolute; right: 10px; top: -2px; width: 7px; height: 7px; border-radius: 50%; background: #77776f; }
.titlebar h1 { font-size: 15px; font-weight: 600; margin: 0 91px 0 auto; white-space: nowrap; }
.cpu, .addr { display: flex; align-items: center; gap: 6px; color: #55554f; }
.addr { gap: 2px; }
.faint { color: #b4b4ac; }
.cpu svg { width: 104px; height: 12px; margin-left: 8px; }
.fan { width: 20px; height: 20px; margin: 0 28px 0 17px; }
.winctl { display: flex; gap: 32px; margin-left: 31px; }
.winctl svg { width: 18px; height: 18px; }
.menubar { display: flex; align-items: center; flex: none; height: 48px; padding: 0 24px 0 16px; gap: 34px; font-size: 14px; color: var(--mid); }
.menubar .sel { color: #a0a098; }
.quick { display: flex; gap: 27px; margin-left: auto; font-size: 13px; font-weight: 600; color: #333; }
.quick button { display: flex; align-items: center; gap: 5px; }
.quick svg { width: 14px; height: 14px; }
.quick .import { font-weight: 400; color: var(--soft); gap: 7px; margin-right: 3px; }

.ribbon { position: relative; display: flex; flex: none; height: 94px; padding: 5px 20px 0 16px; color: var(--soft); }
.big { display: flex; flex-direction: column; align-items: center; justify-content: space-between; width: 59px; height: 74px; font-size: 12px; line-height: 20px; }
.big + .big { width: 66px; margin-left: 19px; }
.mitm { width: 44px; height: 42px; margin-top: 2px; }
.pair { display: flex; gap: 15px; padding: 5px 0 0 3px; }
.pair svg { width: 26px; height: 30px; overflow: visible; }
.pair text { font: 700 9px "Open Sans", sans-serif; fill: var(--soft); }
.stack { display: grid; grid-auto-rows: 40px; margin-left: 27px; font-size: 12px; }
.stack button { display: flex; align-items: center; gap: 6px; margin-top: -10px; }
.stack svg { width: 32px; height: 26px; }
.drops { display: grid; grid-auto-rows: 40px; margin-left: 36px; color: var(--mid); }
.drops button { display: flex; align-items: center; gap: 8px; margin-top: -20px; }
.drops svg { width: 12px; height: 12px; }
.spin, .swap { width: 14px; height: 14px; }
.spin { margin-top: 52px; }
.spin.one { margin-left: auto; }
.swap { margin: 28px 0 0 27px; }
.spin.two { margin-left: 376px; }
.modes { width: 57px; margin: -6px 0 0 19px; display: flex; flex-direction: column; gap: 6px; font-size: 12px; color: var(--mid); line-height: 22px; }
.modes .on { background: var(--grey); color: #e0e0da; border-radius: 3px; }
.fold { align-self: flex-start; margin: 47px 0 0 7px; }
.fold svg { width: 22px; height: 20px; }

.tabs { flex: none; height: 31px; position: relative; padding-left: 7px; font-size: 12px; }
.tabs::before { content: ""; display: block; width: 62px; height: 3px; background: var(--grey); margin-left: -7px; }
.tabs button { line-height: 28px; color: #444; }

.home {
  position: relative; flex: 1; min-height: 0; overflow: hidden;
  display: grid; grid-template-columns: 261fr 301fr 261fr 261fr; gap: 55px;
  padding: 13px 43px 0 16px;
}
.home h2 { font-size: 18px; line-height: 36px; font-weight: 600; margin-bottom: 14px; white-space: nowrap; }
.home section + section { margin-top: 44px; }
.home article { display: grid; grid-template-columns: 1fr 12px; margin: 0 0 32px 18px; align-content: start; }
.two { display: grid; grid-template-columns: 1fr 1fr; gap: 37px; margin-left: 18px; }
.home .two article { margin-left: 0; }
.ic { width: 36px; height: 36px; }
.go { width: 12px; height: 12px; margin-top: 8px; }
.home h3 { grid-column: 1 / 3; font-size: 16px; font-weight: 400; line-height: 24px; margin: 7px 0 8px; color: var(--mid); white-space: nowrap; }
.home p { grid-column: 1 / 3; font-family: "Noto Sans CJK SC", sans-serif; line-height: 18px; color: var(--soft); text-align: justify; }
.line { display: block; text-align-last: justify; white-space: nowrap; }
.scroll { position: absolute; right: 0; top: 0; width: 5px; height: 130px; background: #b4b4ac; }

/* taskbar */
.taskbar { position: relative; flex: none; height: 54px; background: var(--bar); display: flex; align-items: center; justify-content: center; }
.pinned { display: flex; justify-content: space-between; width: 635px; }
.pinned button { position: relative; display: grid; place-items: center; width: 42px; height: 48px; border-radius: 4px; }
.pinned svg { width: 28px; height: 28px; }
.pinned button::after { content: ""; position: absolute; bottom: 1px; width: 7px; height: 4px; border-radius: 2px; background: var(--grey); }
.pinned .idle::after { display: none; }
.pinned .on { background: #262626; }
.pinned .on::after { width: 18px; }
.ws { font: 700 9px "Open Sans", sans-serif; fill: var(--paper); }
.tray { position: absolute; right: 20px; top: 0; height: 100%; display: flex; align-items: center; gap: 7px; color: #e8e8e4; }
.tray > svg { width: 20px; height: 20px; }
.tray .mic { margin-left: 4px; }
.ime { font-size: 15px; margin: 0 11px 0 12px; }
.now { display: flex; flex-direction: column; align-items: flex-end; line-height: 18px; margin-left: 11px; }
```
